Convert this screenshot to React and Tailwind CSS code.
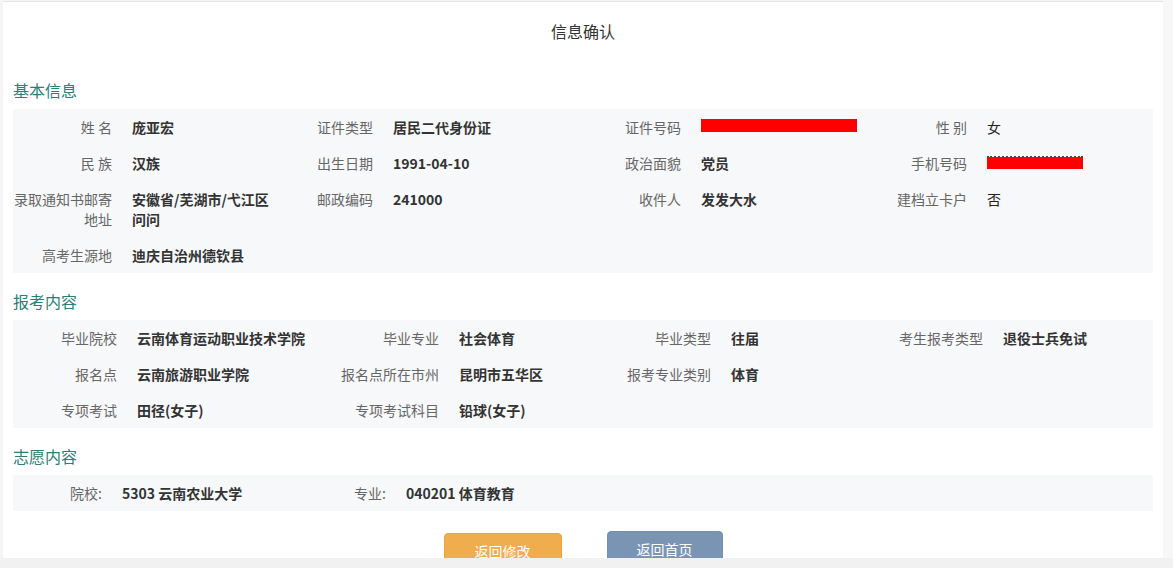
import React from "react";

const LBL = "text-right pr-5 py-2 leading-5 text-[#666]";
const VAL = "py-2 leading-5 font-bold text-[#333]";

function Grid({ cols, rows }) {
  return (
    <div className={`grid ${cols} bg-[#f7f8fa] text-[14px]`}>
      {rows.map((row, ri) =>
        row.map((cell, ci) => (
          <div key={`${ri}-${ci}`} className={ci % 2 === 0 ? LBL : VAL}>
            {cell}
          </div>
        ))
      )}
    </div>
  );
}

function Heading({ children, className = "" }) {
  return (
    <div className={`text-[16px] leading-5 text-[#2a8073] ${className}`}>{children}</div>
  );
}

const IdRed = <div className="mt-[2px] h-[13px] w-[156px] bg-[#ff0000]" />;
const PhoneRed = (
  <div className="pt-[3px]">
    <div className="h-[1px] w-[96px] border-t-2 border-dotted border-[#444]" />
    <div className="h-[12px] w-[96px] bg-[#ff0000] -mt-[1px]" />
  </div>
);
const Normal = ({ children }) => <span className="font-normal text-[#222]">{children}</span>;

export default function App() {
  const basic = [
    ["姓 名", "庞亚宏", "证件类型", "居民二代身份证", "证件号码", IdRed, "性 别", <Normal>女</Normal>],
    ["民 族", "汉族", "出生日期", "1991-04-10", "政治面貌", "党员", "手机号码", PhoneRed],
    ["录取通知书邮寄地址", "安徽省/芜湖市/弋江区问问", "邮政编码", "241000", "收件人", "发发大水", "建档立卡户", <Normal>否</Normal>],
    ["高考生源地", "迪庆自治州德钦县", "", "", "", "", "", ""],
  ];
  const apply = [
    ["毕业院校", "云南体育运动职业技术学院", "毕业专业", "社会体育", "毕业类型", "往届", "考生报考类型", "退役士兵免试"],
    ["报名点", "云南旅游职业学院", "报名点所在市州", "昆明市五华区", "报考专业类别", "体育", "", ""],
    ["专项考试", "田径(女子)", "专项考试科目", "铅球(女子)", "", "", "", ""],
  ];
  const wish = [["院校:", "5303 云南农业大学", "专业:", "040201 体育教育"]];

  return (
    <div className="w-[1173px] h-[568px] flex flex-col bg-[#f1f1f1] overflow-hidden font-['Noto_Sans_CJK_SC','Noto_Sans',sans-serif]">
      <div className="flex h-[558px] bg-[#f5f5f5]">
        <div className="ml-[3px] mt-[1px] w-[1160px] h-[557px] overflow-hidden border-t border-[#e4e4e4] bg-white px-[10px] flex flex-col">
          <div className="pt-[19px] text-center text-[16px] leading-5 text-[#333]">信息确认</div>
          <Heading className="mt-[39px] mb-[9px]">基本信息</Heading>
          <Grid cols="grid-cols-[119px_145px_116px_167px_141px_159px_127px_1fr]" rows={basic} />
          <Heading className="mt-[18px] mb-[9px]">报考内容</Heading>
          <Grid cols="grid-cols-[124px_178px_144px_141px_131px_139px_133px_1fr]" rows={apply} />
          <Heading className="mt-[18px] mb-[9px]">志愿内容</Heading>
          <Grid cols="grid-cols-[109px_190px_94px_1fr]" rows={wish} />
          <div className="mt-[20px] flex justify-center items-start gap-[45px] text-[14px]">
            <button className="mt-[2px] w-[118px] h-[36px] rounded-[4px] bg-[#f0ad4e] border border-[#eea236] text-white leading-5">
              返回修改
            </button>
            <button className="w-[116px] h-[36px] rounded-[4px] bg-[#7a95b3] border border-[#7390b0] text-white leading-5">
              返回首页
            </button>
          </div>
        </div>
        <div className="w-[10px] bg-[#f7f7f7]" />
      </div>
      <div className="h-[10px] bg-[#f1f1f1]" />
    </div>
  );
}
